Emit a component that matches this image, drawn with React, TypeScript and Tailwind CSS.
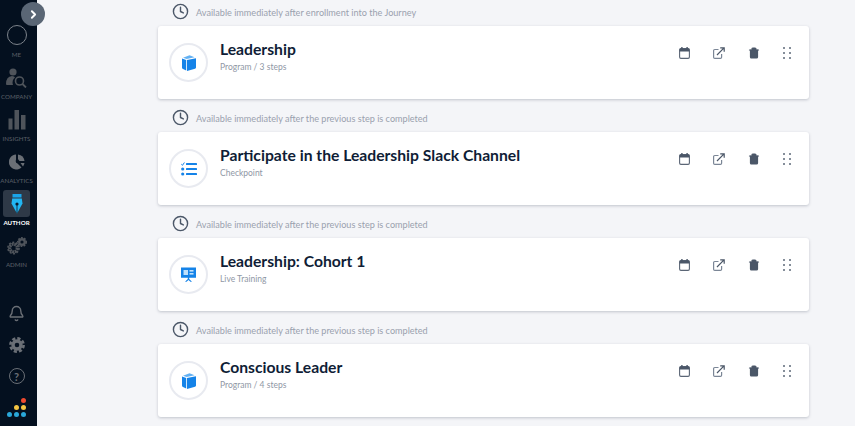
import React from 'react';
import { ChevronRight, Bell, Clock, Trash2 } from 'lucide-react';

const steps = [
  { note: 'Available immediately after enrollment into the Journey', title: 'Leadership', sub: 'Program / 3 steps', kind: 'book' },
  { note: 'Available immediately after the previous step is completed', title: 'Participate in the Leadership Slack Channel', sub: 'Checkpoint', kind: 'list' },
  { note: 'Available immediately after the previous step is completed', title: 'Leadership: Cohort 1', sub: 'Live Training', kind: 'screen' },
  { note: 'Available immediately after the previous step is completed', title: 'Conscious Leader', sub: 'Program / 4 steps', kind: 'book' },
];

function BookIcon() {
  return (
    <svg width="14" height="16" viewBox="0 0 14 16" fill="#1583e8">
      <path d="M0 3.5 L4.2 5 V15.5 L1 14 Q0 13.6 0 12.5 Z" />
      <path d="M5 5 L14 3.2 V12.6 Q14 13.6 13 13.8 L5 16 Z" />
      <path d="M1 2.8 L7.5 0.3 L12.6 2.2 L4.7 4.1 Z" fill="#63b1f3" />
    </svg>
  );
}

function ListIcon() {
  return (
    <svg width="16" height="14" viewBox="0 0 16 14" fill="#1583e8">
      <path d="M0.3 2.2 L1.5 3.3 L3.4 0.5" fill="none" stroke="#1583e8" strokeWidth="1" />
      <rect x="5" y="1" width="11" height="2" rx="0.6" />
      <circle cx="1.7" cy="7" r="1.6" />
      <rect x="5" y="6" width="11" height="2" rx="0.6" />
      <circle cx="1.7" cy="12" r="1.6" />
      <rect x="5" y="11" width="11" height="2" rx="0.6" />
    </svg>
  );
}

function ScreenIcon() {
  return (
    <svg width="15" height="15" viewBox="0 0 15 15" fill="#1583e8">
      <path d="M0 0.5 H15 V10.8 H8.2 V12 L11 14.7 H9.4 L7.5 13 L5.6 14.7 H4 L6.8 12 V10.8 H0 Z" />
      <rect x="2.5" y="3" width="4.5" height="5" fill="#bfe0fb" />
      <rect x="8.5" y="3" width="4" height="1.6" fill="#bfe0fb" />
      <rect x="8.5" y="6" width="4" height="1.6" fill="#bfe0fb" />
    </svg>
  );
}

function CalendarIcon() {
  return (
    <svg width="11" height="12" viewBox="0 0 11 12">
      <rect x="0.6" y="1.6" width="9.8" height="9.8" rx="1.3" fill="#fff" stroke="#5b6676" strokeWidth="1.1" />
      <path d="M0.6 2.6 Q0.6 1.6 1.6 1.6 H9.4 Q10.4 1.6 10.4 2.6 V4.5 H0.6 Z" fill="#4b5768" />
      <rect x="2.2" y="0" width="1.4" height="2.2" fill="#4b5768" />
      <rect x="7.4" y="0" width="1.4" height="2.2" fill="#4b5768" />
    </svg>
  );
}

function ExternalIcon() {
  return (
    <svg width="12" height="12" viewBox="0 0 12 12" fill="none" stroke="#4b5768" strokeWidth="1.2">
      <path d="M5.5 2.5 H1.8 Q0.6 2.5 0.6 3.7 V10.2 Q0.6 11.4 1.8 11.4 H7.4 Q8.6 11.4 8.6 10.2 V7" stroke="#7b8696" />
      <path d="M4 8 L10.8 1.2 M7.2 0.8 H11.2 V4.8" />
    </svg>
  );
}

function DragDots() {
  return (
    <div className="grid grid-cols-2 gap-x-[4px] gap-y-[3px]">
      {[0, 1, 2, 3, 4, 5].map((d) => (
        <span key={d} className="w-[2px] h-[2px] bg-[#5d6878] rounded-full" />
      ))}
    </div>
  );
}

function CompanyIcon() {
  return (
    <svg width="24" height="20" viewBox="0 0 24 20" fill="#4f545b">
      <circle cx="8" cy="4" r="3.6" />
      <path d="M1 16 Q1 8.5 7 8 Q9.5 8 10 9.5 Q6.5 12 8 17 H2 Q1 17 1 16 Z" />
      <circle cx="14.5" cy="13" r="4" fill="none" stroke="#4f545b" strokeWidth="1.6" />
      <path d="M17.5 16 L21 19.5" stroke="#4f545b" strokeWidth="1.8" />
    </svg>
  );
}

function InsightsIcon() {
  return (
    <svg width="18" height="20" viewBox="0 0 18 20" fill="#4f545b">
      <rect x="0.5" y="8.5" width="4" height="11" />
      <rect x="6.5" y="0" width="4.5" height="19.5" />
      <rect x="13" y="5" width="4.5" height="14.5" />
    </svg>
  );
}

function AnalyticsIcon() {
  return (
    <svg width="16" height="16" viewBox="0 0 16 16" fill="#6a6f76">
      <path d="M7 0.5 A7.5 7.5 0 1 0 12.5 13.5 L8.5 9.5 Q6 9 7 5.5 Z" />
      <path d="M9 0.5 A7.5 7.5 0 0 1 15.5 7 H10.5 Q9.5 6 9 5 Z" />
      <path d="M11.5 9 H15.5 A7.5 7.5 0 0 1 14 12.5 Z" />
    </svg>
  );
}

function PenIcon() {
  return (
    <svg width="12" height="20" viewBox="0 0 12 20">
      <rect x="1.5" y="0" width="9" height="3.5" fill="#1aa4e8" />
      <path d="M1.2 4.5 H10.8 L11.5 9.5 L6 19.5 L0.5 9.5 Z" fill="#22b6f2" />
      <circle cx="6" cy="10" r="1.6" fill="#0b1c30" />
      <path d="M5.6 11 H6.4 V19 H5.6 Z" fill="#0b1c30" />
    </svg>
  );
}

function AdminIcon() {
  return (
    <svg width="22" height="18" viewBox="0 0 22 18" fill="none" stroke="#4f545b">
      <circle cx="7.5" cy="11" r="3.8" strokeWidth="3.2" strokeDasharray="2 0.6" />
      <circle cx="7.5" cy="11" r="5.6" strokeWidth="1.6" strokeDasharray="2 1.5" />
      <circle cx="16" cy="5" r="2.8" strokeWidth="2.4" />
      <circle cx="16" cy="5" r="4.4" strokeWidth="1.3" strokeDasharray="1.8 1.4" />
    </svg>
  );
}

function GearIcon() {
  return (
    <svg width="16" height="16" viewBox="0 0 16 16" fill="none" stroke="#6a6f76">
      <circle cx="8" cy="8" r="4" strokeWidth="3.4" />
      <circle cx="8" cy="8" r="6.6" strokeWidth="2.6" strokeDasharray="3.2 2" />
    </svg>
  );
}

function NavItem({ label, active, children }: { label: string; active?: boolean; children: React.ReactNode }) {
  return (
    <div className="h-[42px] flex flex-col items-center justify-end">
      <div className={`w-[27px] h-[27px] flex items-center justify-center rounded-[3px] ${active ? 'bg-[#2e3947]' : ''}`}>
        {children}
      </div>
      <span className={`text-[6.2px] leading-[9px] mt-[1px] whitespace-nowrap ${active ? 'text-white font-bold' : 'text-[#565c64] font-medium'}`}>
        {label}
      </span>
    </div>
  );
}

function Sidebar() {
  return (
    <aside className="w-[37px] shrink-0 h-[426px] bg-[#04101f] pr-[4px] flex flex-col items-center">
      <div className="pt-[17px] w-full flex flex-col">
        <NavItem label="ME"><div className="w-[20px] h-[20px] -mt-[2px] rounded-full border border-[#7d838b]" /></NavItem>
        <NavItem label="COMPANY"><CompanyIcon /></NavItem>
        <NavItem label="INSIGHTS"><InsightsIcon /></NavItem>
        <NavItem label="ANALYTICS"><AnalyticsIcon /></NavItem>
        <NavItem label="AUTHOR" active><PenIcon /></NavItem>
        <NavItem label="ADMIN"><AdminIcon /></NavItem>
      </div>
      <div className="mt-auto flex flex-col items-center gap-[15px] pb-[9px] text-[#6a6f76]">
        <Bell size={17} strokeWidth={2} />
        <GearIcon />
        <div className="w-[16px] h-[16px] rounded-full border border-[#6a6f76] flex items-center justify-center text-[11px] font-bold leading-none">?</div>
        <div className="-mt-[1px] flex flex-col items-end gap-[2px]">
          <span className="w-[5px] h-[5px] rounded-full bg-[#ef4a2f]" />
          <div className="flex gap-[2px]">
            <span className="w-[5px] h-[5px] rounded-full bg-[#f4c542]" />
            <span className="w-[5px] h-[5px] rounded-full bg-[#f4c542]" />
          </div>
          <div className="flex gap-[2px]">
            <span className="w-[5px] h-[5px] rounded-full bg-[#2aa7d8]" />
            <span className="w-[5px] h-[5px] rounded-full bg-[#2aa7d8]" />
            <span className="w-[5px] h-[5px] rounded-full bg-[#2aa7d8]" />
          </div>
        </div>
      </div>
    </aside>
  );
}

export default function App() {
  return (
    <div className="relative flex h-[426px] w-[855px] overflow-hidden bg-[#f4f5f8] font-['Lato',sans-serif]">
      <Sidebar />
      <div className="absolute left-[21px] top-[2px] w-[24px] h-[24px] rounded-full bg-[#5a6675] flex items-center justify-center text-white">
        <ChevronRight size={13} strokeWidth={3.5} />
      </div>
      <main className="flex-1 pl-[121px] pr-[46px]">
        {steps.map((s, i) => (
          <section key={i} className="mb-[7px]">
            <div className="h-[26px] pb-[2px] flex items-center pl-[14px] gap-[7px]">
              <Clock size={17} strokeWidth={2} className="text-[#4b5768] -mt-[1px]" />
              <span className="text-[9.12px] leading-[12px] text-[#9aa1ae] mt-[2px]">{s.note}</span>
            </div>
            <div className="h-[73px] bg-white rounded-[3px] shadow-[0_1px_3px_rgba(40,50,70,0.25)] flex items-start pl-[11px] pr-[18px] pt-[17px]">
              <div className="w-[39px] h-[39px] rounded-full border-[2px] border-[#e8eaf0] flex items-center justify-center shrink-0">
                {s.kind === 'book' && <BookIcon />}
                {s.kind === 'list' && <ListIcon />}
                {s.kind === 'screen' && <ScreenIcon />}
              </div>
              <div className="ml-[12px] -mt-[6px]">
                <h2 className="text-[15.7px] leading-[24px] font-bold text-[#0f1d36]">{s.title}</h2>
                <p className="text-[8.5px] leading-[12px] text-[#8f97a5]">{s.sub}</p>
              </div>
              <div className="ml-auto mt-[4px] flex items-center gap-[23px]">
                <CalendarIcon />
                <ExternalIcon />
                <Trash2 size={12} strokeWidth={2.4} className="text-[#4b5768]" fill="#4b5768" />
                <DragDots />
              </div>
            </div>
          </section>
        ))}
      </main>
    </div>
  );
}
